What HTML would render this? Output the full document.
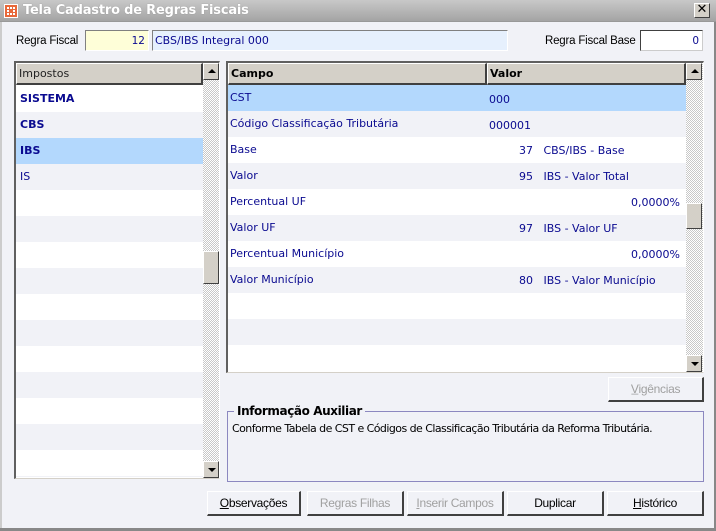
<!DOCTYPE html>
<html><head><meta charset="utf-8"><style>
*{margin:0;padding:0;box-sizing:border-box}
body{width:716px;height:531px;background:#f1f2f7;font-family:"DejaVu Sans","Liberation Sans",sans-serif;font-size:11px;position:relative;overflow:hidden;color:#000}
.a{position:absolute}
.sunk{border-top:1px solid #808080;border-left:1px solid #808080;border-bottom:1px solid #fff;border-right:1px solid #fff}
.btn{position:absolute;height:25px;background:#f1f2f7;border-top:1px solid #fff;border-left:1px solid #fff;border-right:2px solid #404040;border-bottom:2px solid #404040;text-align:center;line-height:23px;font-family:"Liberation Sans",sans-serif;font-size:12px;letter-spacing:-0.3px}
.dis{color:#a0a0a0}
.hdr{position:absolute;height:22px;background:#d4d0c8;border-top:1px solid #fff;border-left:1px solid #fff;border-right:2px solid #404040;border-bottom:2px solid #404040;font-weight:bold;line-height:19px;padding-left:2px;font-size:11px}
.row{position:absolute;height:26px;color:#0a0a90;line-height:26px;padding-left:4px}
.sb{position:absolute;background:repeating-conic-gradient(#c8c8c8 0 25%,#fff 0 50%) 0 0/2px 2px}
.sbb{position:absolute;width:16px;height:17px;background:#d4d0c8;border-top:1px solid #fff;border-left:1px solid #fff;border-right:1px solid #404040;border-bottom:1px solid #404040}
.up:after,.dn:after{content:"";position:absolute;left:4px;border-left:4px solid transparent;border-right:4px solid transparent}
.up:after{top:5px;border-bottom:4px solid #000}
.dn:after{top:6px;border-top:4px solid #000}
.lbl{font-family:"Liberation Sans",sans-serif;font-size:11.5px;letter-spacing:-0.2px}
</style></head><body>
<div class="a" style="left:0;top:0;width:716px;height:22px;background:linear-gradient(#c8c8c8,#a4a4a4);border-bottom:1px solid #999"></div>
<div class="a" style="left:4px;top:4px;width:14px;height:14px;background:#e8683a;border:1px solid #fff"></div>
<div class="a" style="left:7px;top:7px;width:8px;height:8px;border:2px dotted #fff"></div>
<div class="a" style="left:23px;top:3px;color:#fff;font-weight:bold;font-size:13px;font-family:'DejaVu Sans',sans-serif;letter-spacing:-0.2px;text-shadow:0 0 1px #888">Tela Cadastro de Regras Fiscais</div>
<div class="a" style="left:694px;top:3px;width:16px;height:15px;background:#d4d0c8;border-top:1px solid #fff;border-left:1px solid #fff;border-right:1px solid #404040;border-bottom:1px solid #404040;font-weight:bold;font-size:13px;line-height:12px;text-align:center">✕</div>
<div class="a" style="left:0;top:22px;width:2px;height:509px;background:#ccc"></div>
<div class="a" style="left:714px;top:22px;width:2px;height:509px;background:#888"></div>
<div class="a" style="left:0;top:528px;width:716px;height:3px;background:#888"></div>
<div class="a lbl" style="left:16px;top:35px">Regra Fiscal</div>
<div class="a sunk" style="left:85px;top:30px;width:64px;height:21px;background:#fefed8;text-align:right;padding-right:3px;line-height:21px;color:#0a0a90;font-size:10.5px">12</div>
<div class="a sunk" style="left:152px;top:30px;width:356px;height:21px;background:#e6f0fd;padding-left:2px;line-height:19px;color:#0a0a90;font-size:11px">CBS/IBS Integral 000</div>
<div class="a lbl" style="left:545px;top:35px">Regra Fiscal Base</div>
<div class="a" style="left:640px;top:30px;width:63px;height:21px;background:#fff;border-top:1px solid #404040;border-left:1px solid #404040;border-bottom:1px solid #ccc;border-right:1px solid #ccc;text-align:right;padding-right:3px;line-height:21px;color:#0a0a90;font-size:10.5px">0</div>
<div class="a" style="left:14px;top:61px;width:206px;height:418px;border-top:2px solid #606060;border-left:2px solid #606060;border-right:1px solid #fff;border-bottom:1px solid #d4d0c8;background:#fff"></div>
<div class="hdr" style="left:16px;top:63px;width:187px;font-weight:normal;color:#222">Impostos</div>
<div class="row" style="left:16px;top:86px;width:187px;background:#fff;font-weight:bold">SISTEMA</div>
<div class="row" style="left:16px;top:112px;width:187px;background:#f1f2f7;font-weight:bold">CBS</div>
<div class="row" style="left:16px;top:138px;width:187px;background:#b3d8fd;font-weight:bold">IBS</div>
<div class="row" style="left:16px;top:164px;width:187px;background:#f1f2f7">IS</div>
<div class="a" style="left:16px;top:190px;width:187px;height:287px;background:repeating-linear-gradient(#fff 0 26px,#f1f2f7 26px 52px)"></div>
<div class="sb" style="left:203px;top:63px;width:16px;height:415px"></div>
<div class="sbb up" style="left:203px;top:63px"></div>
<div class="sbb" style="left:203px;top:251px;height:33px"></div>
<div class="sbb dn" style="left:203px;top:461px"></div>
<div class="a" style="left:226px;top:61px;width:478px;height:312px;border-top:2px solid #606060;border-left:2px solid #606060;border-right:1px solid #fff;border-bottom:1px solid #d4d0c8;background:#fff"></div>
<div class="hdr" style="left:228px;top:63px;width:259px">Campo</div>
<div class="hdr" style="left:487px;top:63px;width:199px">Valor</div>
<div class="a" style="left:228px;top:85px;width:458px;height:286px;background:repeating-linear-gradient(#fff 0 26px,#f1f2f7 26px 52px)"></div>
<div class="a" style="left:228px;top:85px;width:458px;height:26px;background:#b3d8fd"></div>
<div class="a" style="left:228px;top:111px;width:458px;height:26px;background:#f1f2f7"></div>
<div class="a" style="left:228px;top:137px;width:458px;height:234px;background:repeating-linear-gradient(#fff 0 26px,#f1f2f7 26px 52px)"></div>
<div class="a" style="left:230px;top:87px;color:#0a0a90;line-height:22px">
<div style="height:26px">CST</div><div style="height:26px">Código Classificação Tributária</div><div style="height:26px">Base</div><div style="height:26px">Valor</div><div style="height:26px">Percentual UF</div><div style="height:26px">Valor UF</div><div style="height:26px">Percentual Município</div><div style="height:26px">Valor Município</div></div>
<div class="a" style="left:489px;top:87px;color:#0a0a90;line-height:26px">
<div style="height:26px">000</div><div style="height:26px">000001</div></div>
<div class="a" style="left:480px;top:138px;width:200px;color:#0a0a90;line-height:26px">
<div style="height:26px"><span style="display:inline-block;width:53px;text-align:right">37</span>&nbsp;&nbsp;&nbsp;CBS/IBS - Base</div>
<div style="height:26px"><span style="display:inline-block;width:53px;text-align:right">95</span>&nbsp;&nbsp;&nbsp;IBS - Valor Total</div>
<div style="height:26px;text-align:right">0,0000%</div>
<div style="height:26px"><span style="display:inline-block;width:53px;text-align:right">97</span>&nbsp;&nbsp;&nbsp;IBS - Valor UF</div>
<div style="height:26px;text-align:right">0,0000%</div>
<div style="height:26px"><span style="display:inline-block;width:53px;text-align:right">80</span>&nbsp;&nbsp;&nbsp;IBS - Valor Município</div></div>
<div class="sb" style="left:686px;top:63px;width:17px;height:309px"></div>
<div class="sbb up" style="left:686px;top:63px"></div>
<div class="sbb" style="left:686px;top:203px;height:26px"></div>
<div class="sbb dn" style="left:686px;top:355px"></div>
<div class="btn dis" style="left:608px;top:377px;width:96px">V̲igências</div>
<div class="a" style="left:227px;top:411px;width:477px;height:71px;border:1px solid #8c88c0"></div>
<div class="a" style="left:234px;top:404px;background:#f1f2f7;padding:0 3px;font-weight:bold;font-size:12px;font-family:'DejaVu Sans',sans-serif;letter-spacing:-0.4px">Informação Auxiliar</div>
<div class="a" style="left:232px;top:422px;font-size:11px;letter-spacing:-0.55px">Conforme Tabela de CST e Códigos de Classificação Tributária da Reforma Tributária.</div>
<div class="btn" style="left:207px;top:491px;width:94px"><u>O</u>bservações</div>
<div class="btn dis" style="left:307px;top:491px;width:97px">Regras Filhas</div>
<div class="btn dis" style="left:407px;top:491px;width:97px"><u>I</u>nserir Campos</div>
<div class="btn" style="left:507px;top:491px;width:97px">Duplicar</div>
<div class="btn" style="left:607px;top:491px;width:97px"><u>H</u>istórico</div>
</body></html>
